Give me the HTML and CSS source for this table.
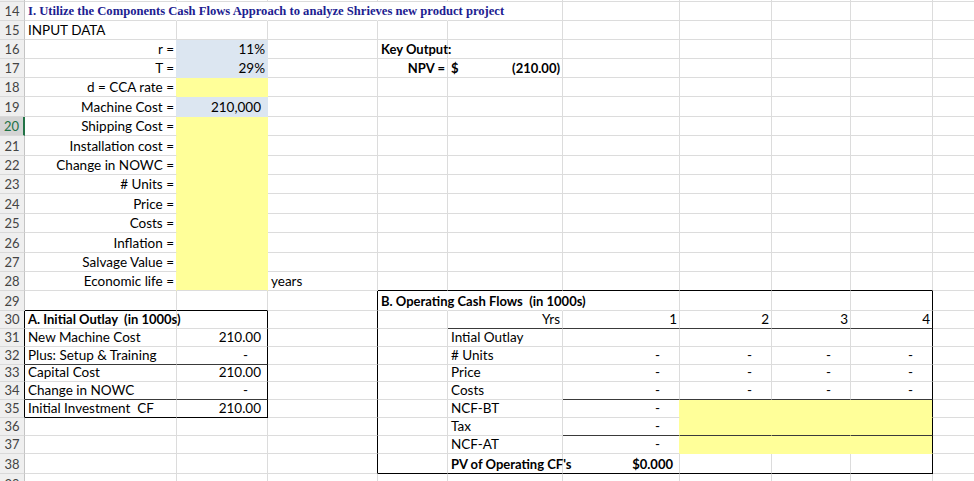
FILE: index.html
```html
<!DOCTYPE html>
<html lang="en">
<head>
<meta charset="utf-8">
<title>Components Cash Flows Approach</title>
<link rel="stylesheet" href="styles.css">
</head>
<body>
<table class="sheet">
<colgroup>
<col class="c-h"><col class="c-a"><col class="c-b"><col class="c-c"><col class="c-d"><col class="c-e"><col class="c-f"><col class="c-g"><col class="c-h2"><col class="c-i"><col class="c-j">
</colgroup>
<tbody>
<tr class="r13"><td class="rh"></td><td></td><td></td><td></td><td></td><td></td><td></td><td></td><td></td><td></td><td></td></tr>
<tr class="h19"><td class="rh">14</td><td class="title nor">I. Utilize the Components Cash Flows Approach to analyze Shrieves new product project</td><td class="nor"></td><td class="nor"></td><td class="nor"></td><td></td><td></td><td></td><td></td><td></td><td></td></tr>
<tr class="h19"><td class="rh">15</td><td>INPUT DATA</td><td></td><td></td><td></td><td></td><td></td><td></td><td></td><td></td><td></td></tr>
<tr class="h19"><td class="rh">16</td><td class="r rblue">r =</td><td class="r blue">11%</td><td></td><td class="b">Key Output:</td><td></td><td></td><td></td><td></td><td></td><td></td></tr>
<tr class="h19"><td class="rh">17</td><td class="r rblue">T =</td><td class="r blue">29%</td><td></td><td class="r b">NPV =</td><td class="b"><div class="accrow"><span class="cur">$</span><span>(210.00)</span></div></td><td></td><td></td><td></td><td></td><td></td></tr>
<tr class="h19"><td class="rh">18</td><td class="r ryel">d = CCA rate =</td><td class="yel"></td><td></td><td></td><td></td><td></td><td></td><td></td><td></td><td></td></tr>
<tr class="h20"><td class="rh">19</td><td class="r rblue">Machine Cost =</td><td class="r acc blue">210,000</td><td></td><td></td><td></td><td></td><td></td><td></td><td></td><td></td></tr>
<tr class="h19"><td class="rh sel">20</td><td class="r ryel">Shipping Cost =</td><td class="yel"></td><td></td><td></td><td></td><td></td><td></td><td></td><td></td><td></td></tr>
<tr class="h20"><td class="rh">21</td><td class="r ryel">Installation cost =</td><td class="yel"></td><td></td><td></td><td></td><td></td><td></td><td></td><td></td><td></td></tr>
<tr class="h19"><td class="rh">22</td><td class="r ryel">Change in NOWC =</td><td class="yel"></td><td></td><td></td><td></td><td></td><td></td><td></td><td></td><td></td></tr>
<tr class="h19"><td class="rh">23</td><td class="r ryel"># Units =</td><td class="yel"></td><td></td><td></td><td></td><td></td><td></td><td></td><td></td><td></td></tr>
<tr class="h20"><td class="rh">24</td><td class="r ryel">Price =</td><td class="yel"></td><td></td><td></td><td></td><td></td><td></td><td></td><td></td><td></td></tr>
<tr class="h19"><td class="rh">25</td><td class="r ryel">Costs =</td><td class="yel"></td><td></td><td></td><td></td><td></td><td></td><td></td><td></td><td></td></tr>
<tr class="h20"><td class="rh">26</td><td class="r ryel">Inflation =</td><td class="yel"></td><td></td><td></td><td></td><td></td><td></td><td></td><td></td><td></td></tr>
<tr class="h19"><td class="rh">27</td><td class="r ryel">Salvage Value =</td><td class="yel"></td><td></td><td></td><td></td><td></td><td></td><td></td><td></td><td></td></tr>
<tr class="h19"><td class="rh">28</td><td class="r ryel">Economic life =</td><td class="yel yel-last"></td><td>years</td><td class="kb"></td><td class="kb"></td><td class="kb"></td><td class="kb"></td><td class="kb"></td><td class="kb"></td><td></td></tr>
<tr class="h20"><td class="rh">29</td><td class="kb"></td><td class="kb"></td><td class="kr"></td><td class="b nor">B. Operating Cash Flows&nbsp; (in 1000s)</td><td class="nor"></td><td></td><td></td><td></td><td class="kr"></td><td></td></tr>
<tr class="h18"><td class="rh kr">30</td><td class="b">A. Initial Outlay&nbsp; (in 1000s)</td><td class="kr"></td><td class="kr"></td><td></td><td class="r ib">Yrs</td><td class="r ib">1</td><td class="r ib">2</td><td class="r ib">3</td><td class="r ib kr">4</td><td></td></tr>
<tr class="h18"><td class="rh kr">31</td><td>New Machine Cost</td><td class="r acc kr">210.00</td><td class="kr"></td><td></td><td>Intial Outlay</td><td></td><td></td><td></td><td class="kr"></td><td></td></tr>
<tr class="h18"><td class="rh kr">32</td><td class="ib">Plus: Setup &amp; Training</td><td class="dash ib kr">-</td><td class="kr"></td><td></td><td># Units</td><td class="dash">-</td><td class="dash">-</td><td class="dash">-</td><td class="dash kr">-</td><td></td></tr>
<tr class="h17"><td class="rh kr">33</td><td>Capital Cost</td><td class="r acc kr">210.00</td><td class="kr"></td><td></td><td>Price</td><td class="dash">-</td><td class="dash">-</td><td class="dash">-</td><td class="dash kr">-</td><td></td></tr>
<tr class="h18"><td class="rh kr">34</td><td class="ib">Change in NOWC</td><td class="dash ib kr">-</td><td class="kr"></td><td></td><td>Costs</td><td class="dash ib">-</td><td class="dash ib">-</td><td class="dash ib">-</td><td class="dash ib kr">-</td><td></td></tr>
<tr class="h18"><td class="rh kr">35</td><td class="kb">Initial Investment&nbsp; CF</td><td class="r acc kb kr">210.00</td><td class="kr"></td><td></td><td>NCF-BT</td><td class="dash ryel">-</td><td class="yel"></td><td class="yel"></td><td class="yel kr"></td><td></td></tr>
<tr class="h18"><td class="rh">36</td><td></td><td></td><td class="kr"></td><td></td><td>Tax</td><td class="dash ryel ib">-</td><td class="yel ib"></td><td class="yel ib"></td><td class="yel ib kr"></td><td></td></tr>
<tr class="h18"><td class="rh">37</td><td></td><td></td><td class="kr"></td><td></td><td>NCF-AT</td><td class="dash ryel">-</td><td class="yel"></td><td class="yel"></td><td class="yel kr"></td><td></td></tr>
<tr class="h20"><td class="rh">38</td><td></td><td></td><td class="kr"></td><td class="kb"></td><td class="r b kb">PV of Operating CF's</td><td class="r b acc kb">$0.000</td><td class="kb"></td><td class="kb"></td><td class="kb kr"></td><td></td></tr>
<tr class="h20"><td class="rh">39</td><td></td><td></td><td></td><td></td><td></td><td></td><td></td><td></td><td></td><td></td></tr>
</tbody>
</table>
</body>
</html>
```

FILE: styles.css
```css
html, body {
  margin: 0;
  padding: 0;
  background: #fff;
  overflow: hidden;
}

.sheet {
  border-collapse: separate;
  border-spacing: 0;
  table-layout: fixed;
  width: 993px;
  font-family: Lato, "Liberation Sans", sans-serif;
  font-size: 13.5px;
  color: #000;
}

.c-h { width: 25px; }
.c-a { width: 152px; }
.c-b { width: 91px; }
.c-c { width: 110px; }
.c-d { width: 70px; }
.c-e { width: 115px; }
.c-f { width: 117px; }
.c-g { width: 92px; }
.c-h2 { width: 79px; }
.c-i { width: 82px; }
.c-j { width: 60px; }

.sheet td {
  box-sizing: border-box;
  border-right: 1px solid #dcdcdc;
  border-bottom: 1px solid #dcdcdc;
  padding: 0 2px 1px 3px;
  line-height: 15px;
  vertical-align: bottom;
  white-space: nowrap;
  overflow: visible;
}

.r13 { height: 2px; }
.r13 td { font-size: 0; line-height: 0; padding: 0; }
.h17 { height: 17px; }
.h18 { height: 18px; }
.h19 { height: 19px; }
.h20 { height: 20px; }

.sheet td.rh {
  background: #efefef;
  color: #444;
  text-align: center;
  padding: 0 0 1px 0;
  font-size: 13px;
  border-right-color: #c4c4c4;
  border-bottom-color: #d9d9d9;
}

.sheet td.sel {
  background: #d4d4d4;
  color: #1e7145;
  border-right: 2px solid #217346;
}

.title {
  font-family: "Liberation Serif", "Times New Roman", serif;
  font-weight: bold;
  font-size: 12.6px;
  color: #202090;
}

.r { text-align: right; }
.b { font-weight: bold; font-size: 13px; }
.sheet td.acc { padding-right: 6px; }
.sheet td.dash { text-align: right; padding-right: 19px; }

.accrow {
  display: flex;
  justify-content: space-between;
}
.cur { padding-left: 0; }

.sheet td.nor { border-right-color: transparent; }

.sheet td.blue {
  background: #dce6f1;
  border-right-color: #dce6f1;
  border-bottom-color: #dce6f1;
}
.sheet td.yel {
  background: #ffff99;
  border-right-color: #ffff99;
  border-bottom-color: #ffff99;
}
.sheet td.yel-last { border-bottom-color: #dcdcdc; }
.sheet td.rblue { border-right-color: #dce6f1; }
.sheet td.ryel { border-right-color: #ffff99; }

.sheet td.ib { border-bottom-color: #3a3a3a; }
.sheet td.kb { border-bottom-color: #000; }
.sheet td.kr { border-right-color: #000; }
```
